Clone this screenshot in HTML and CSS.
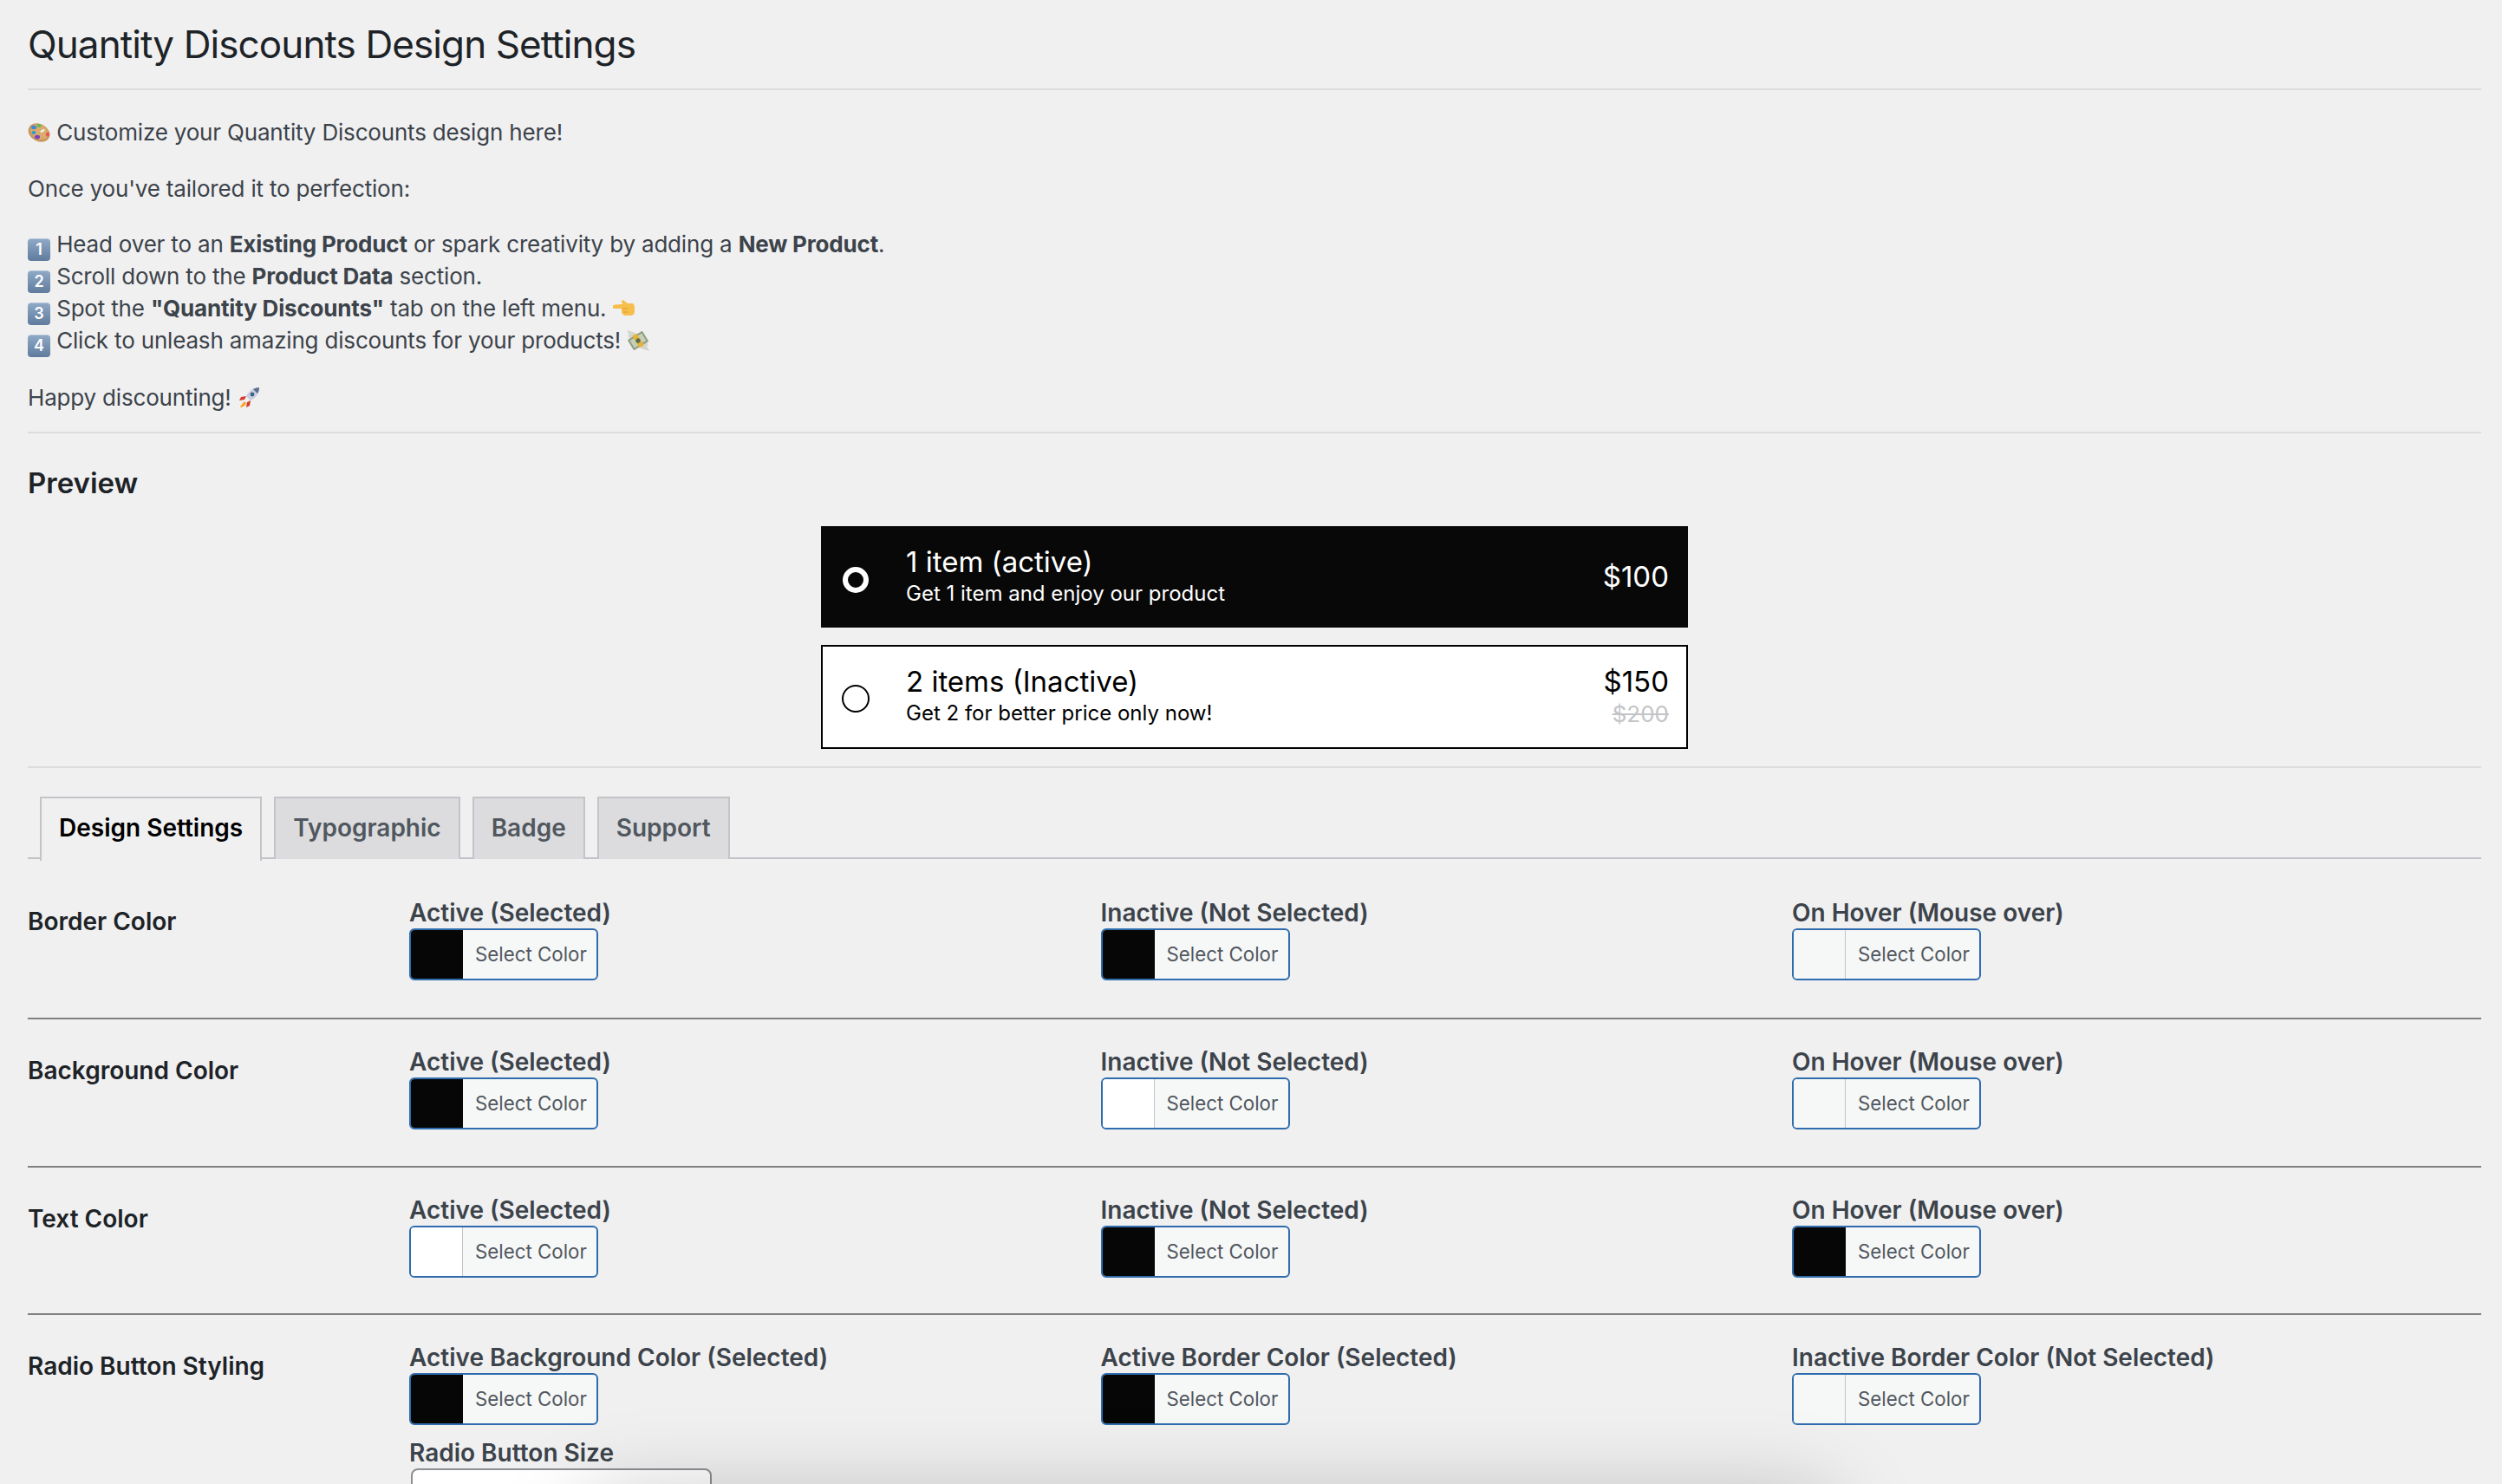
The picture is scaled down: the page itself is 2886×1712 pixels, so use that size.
FILE: index.html
```html
<!DOCTYPE html>
<html>
<head>
<title>Quantity Discounts Design Settings</title>
<meta charset="utf-8">
<link rel="stylesheet" href="styles.css">
</head>
<body>
<div class="wrap">
	<h1>Quantity Discounts Design Settings</h1>

	<div class="intro">
		<p><svg class="emoji" viewBox="0 0 26 26"><ellipse cx="13" cy="13" rx="13" ry="10" transform="rotate(28 13 13)" fill="#c9975a"/><ellipse cx="13" cy="12" rx="11" ry="8" transform="rotate(28 13 13)" fill="#d9ab6c"/><ellipse cx="7" cy="7" rx="3" ry="2.2" fill="#3f86d8"/><ellipse cx="13" cy="5" rx="2.6" ry="1.9" fill="#63b95a"/><ellipse cx="7" cy="13" rx="2.4" ry="2" fill="#2d9ad6"/><ellipse cx="11" cy="18" rx="3" ry="2.3" fill="#7a3fc4"/><ellipse cx="23" cy="15" rx="2.2" ry="2.5" fill="#e8584f"/><ellipse cx="17" cy="11" rx="2.8" ry="1.5" transform="rotate(-25 17 11)" fill="#f5efe2"/></svg> Customize your Quantity Discounts design here!</p>
		<p>Once you've tailored it to perfection:</p>
		<p>
			<span class="keycap">1</span> Head over to an <b>Existing Product</b> or spark creativity by adding a <b>New Product</b>.<br>
			<span class="keycap">2</span> Scroll down to the <b>Product Data</b> section.<br>
			<span class="keycap">3</span> Spot the <b>"Quantity Discounts"</b> tab on the left menu. <svg class="emoji" viewBox="0 0 26 26"><path d="M0 9c4-1 8-1 11-1l-1-3c0-2 2-2 3-1l4 3h5c2 0 3 2 3 5v4c0 3-2 5-5 5h-5c-3 0-5-2-5-5v-3H1c-1 0-2-3-1-4z" fill="#f6bf4b"/><path d="M11 13h6M12 17h5" stroke="#dd9a2b" stroke-width="1"/></svg><br>
			<span class="keycap">4</span> Click to unleash amazing discounts for your products! <svg class="emoji" viewBox="0 0 26 26"><path d="M0 1l10 3 1 6-7-1zM1 6l6 2 1 5-5-2z" fill="#d3d6cd"/><path d="M26 25l-10-3-1-6 7 1zM25 19l-6-2-1-5 5 2z" fill="#d3d6cd"/><g transform="rotate(-32 13 13)"><rect x="3" y="6" width="20" height="14" rx="1" fill="#8f9f7f"/><rect x="5" y="8" width="16" height="10" fill="#c5cfb9"/><rect x="10" y="5" width="6" height="16" fill="#e5b33c"/><circle cx="13" cy="13" r="2.6" fill="#59694c"/></g></svg>
		</p>
		<p class="last">Happy discounting! <svg class="emoji" viewBox="0 0 26 26"><path d="M25 1c-7 0-12 4-15 10l5 5c6-3 10-8 10-15z" fill="#c6cfdb"/><path d="M25 1c-3 0-5 1-7 2l5 5c1-2 2-4 2-7z" fill="#5a6f92"/><circle cx="17" cy="9" r="2.4" fill="#3e5f8f"/><path d="M10 11l-6 1-2 4 6-1zM15 16l-1 6-4 2 1-6z" fill="#d9382e"/><path d="M8 17l-5 6 1 1c3-1 5-2 6-5z" fill="#f6a623"/></svg></p>
	</div>

	<h2>Preview</h2>

	<div class="preview">
		<div class="offer active">
			<span class="radio"></span>
			<div class="offer-text">
				<div class="offer-title">1 item (active)</div>
				<div class="offer-desc">Get 1 item and enjoy our product</div>
			</div>
			<div class="offer-price">
				<div>$100</div>
			</div>
		</div>
		<div class="offer">
			<span class="radio"></span>
			<div class="offer-text">
				<div class="offer-title">2 items (Inactive)</div>
				<div class="offer-desc">Get 2 for better price only now!</div>
			</div>
			<div class="offer-price">
				<div>$150</div>
				<del>$200</del>
			</div>
		</div>
	</div>

	<div class="tabs">
		<a class="tab current">Design Settings</a>
		<a class="tab">Typographic</a>
		<a class="tab">Badge</a>
		<a class="tab">Support</a>
	</div>

	<div class="row first">
		<div class="row-label">Border Color</div>
		<div class="fields">
			<div class="field"><label>Active (Selected)</label><button class="color-btn"><span class="swatch black"></span><span class="btn-text">Select Color</span></button></div>
			<div class="field"><label>Inactive (Not Selected)</label><button class="color-btn"><span class="swatch black"></span><span class="btn-text">Select Color</span></button></div>
			<div class="field"><label>On Hover (Mouse over)</label><button class="color-btn"><span class="swatch pale"></span><span class="btn-text">Select Color</span></button></div>
		</div>
	</div>

	<div class="row">
		<div class="row-label">Background Color</div>
		<div class="fields">
			<div class="field"><label>Active (Selected)</label><button class="color-btn"><span class="swatch black"></span><span class="btn-text">Select Color</span></button></div>
			<div class="field"><label>Inactive (Not Selected)</label><button class="color-btn"><span class="swatch white"></span><span class="btn-text">Select Color</span></button></div>
			<div class="field"><label>On Hover (Mouse over)</label><button class="color-btn"><span class="swatch pale"></span><span class="btn-text">Select Color</span></button></div>
		</div>
	</div>

	<div class="row">
		<div class="row-label">Text Color</div>
		<div class="fields">
			<div class="field"><label>Active (Selected)</label><button class="color-btn"><span class="swatch white"></span><span class="btn-text">Select Color</span></button></div>
			<div class="field"><label>Inactive (Not Selected)</label><button class="color-btn"><span class="swatch black"></span><span class="btn-text">Select Color</span></button></div>
			<div class="field"><label>On Hover (Mouse over)</label><button class="color-btn"><span class="swatch black"></span><span class="btn-text">Select Color</span></button></div>
		</div>
	</div>

	<div class="row">
		<div class="row-label">Radio Button Styling</div>
		<div class="fields">
			<div class="field"><label>Active Background Color (Selected)</label><button class="color-btn"><span class="swatch black"></span><span class="btn-text">Select Color</span></button></div>
			<div class="field"><label>Active Border Color (Selected)</label><button class="color-btn"><span class="swatch black"></span><span class="btn-text">Select Color</span></button></div>
			<div class="field"><label>Inactive Border Color (Not Selected)</label><button class="color-btn"><span class="swatch pale"></span><span class="btn-text">Select Color</span></button></div>
			<div class="field size"><label>Radio Button Size</label><input class="size-input" value="15"></div>
		</div>
	</div>
</div>
<div class="bottom-shadow"></div>
</body>
</html>
```

FILE: styles.css
```css
* {box-sizing:border-box;}
html, body {margin:0;padding:0;height:1712px;overflow:hidden;}
body {background:#f0f0f1;color:#3c434a;font-family:Inter, "Noto Sans", sans-serif;font-size:26px;line-height:36px;position:relative;}

.wrap {padding:0 24px 0 32px;}

h1 {margin:0;height:104px;padding-top:28px;font-size:44px;line-height:46px;font-weight:400;letter-spacing:-0.9px;color:#1d2327;border-bottom:2px solid #dcdcde;}

.intro {padding-top:31px;border-bottom:2px solid #dcdcde;height:396px;letter-spacing:-0.18px;}
.intro p {margin:0 0 28.5px;}
.intro p.last {margin:0;}
.emoji {width:26px;height:26px;vertical-align:-4px;}
.keycap {display:inline-block;width:26px;height:26px;border-radius:4px;border-top:1px solid #b4c6da;background:linear-gradient(#8fa8c6,#5f7b9d);color:#fff;font-size:18px;line-height:23px;font-weight:600;text-align:center;vertical-align:-3px;letter-spacing:0;}

h2 {margin:0;height:107px;padding-top:37px;font-size:33px;line-height:40px;font-weight:600;color:#1d2327;}

.preview {display:flex;flex-direction:column;align-items:center;gap:20px;height:279px;border-bottom:2px solid #dcdcde;}
.offer {display:flex;align-items:center;flex:none;width:1000px;height:120px;padding:0 20px 0 22px;background:#fff;border:2px solid #000;color:#000;}
.offer.active {height:117px;background:#080808;border-color:#080808;color:#fff;}
.radio {width:32px;height:32px;border:2px solid #000;border-radius:50%;background:#fff;flex:none;margin-top:4px;}
.active .radio {width:30px;height:30px;margin:6px 1px 0;border:6px solid #fff;background:#080808;}
.offer-text {flex:1;margin:-2px 0 0 42px;}
.offer-title {font-size:33px;line-height:40px;}
.offer-desc {font-size:24px;line-height:34px;}
.offer-price {font-size:33px;line-height:40px;text-align:right;margin-top:-1px;}
.offer-price del {display:block;font-size:26px;line-height:36px;color:#c3c4c7;}

.tabs {display:flex;height:105px;padding:33px 0 0 14px;border-bottom:2px solid #c3c4c7;gap:14px;}
.tab {display:block;height:72px;padding:0 20px;background:#dcdcde;border:2px solid #c3c4c7;border-bottom:0;font-size:28px;line-height:68px;font-weight:600;color:#50575e;}
.tab.current {height:74px;background:#f0f0f1;color:#000;}

.row {display:flex;height:170.5px;padding-top:31px;border-top:2px solid #808080;}
.row.first {height:183px;padding-top:44px;border-top:0;}
.row-label {width:440px;padding-top:10px;font-size:28px;line-height:36px;font-weight:600;color:#1d2327;flex:none;}
.fields {display:grid;grid-template-columns:repeat(3,797.5px);row-gap:14px;align-content:start;}
.field label {display:block;font-size:28px;line-height:36px;font-weight:600;color:#3c434a;}
.color-btn {display:flex;width:218px;height:60px;padding:0;background:#f6f7f7;border:2px solid #2f6cae;border-radius:6px;overflow:hidden;font-family:inherit;}
.swatch {display:block;width:60px;height:100%;border-right:1px solid #c3c4c7;}
.swatch.black {background:#060606;border-right:0;}
.swatch.white {background:#fff;}
.swatch.pale {background:#f6f7f7;}
.btn-text {font-size:22.3px;line-height:56px;padding-left:14px;color:#50575e;}
.size-input {display:block;width:347px;height:60px;margin-left:2px;padding:0 21px;background:#fff;border:2px solid #8c8f94;border-radius:8px;font-family:inherit;font-size:26px;color:#2c3338;}

/* shadow of a panel just below the fold */
.bottom-shadow {position:absolute;left:680px;width:1430px;top:1730px;height:100px;box-shadow:0 0 100px 0 rgba(0,0,0,.25);}
```
